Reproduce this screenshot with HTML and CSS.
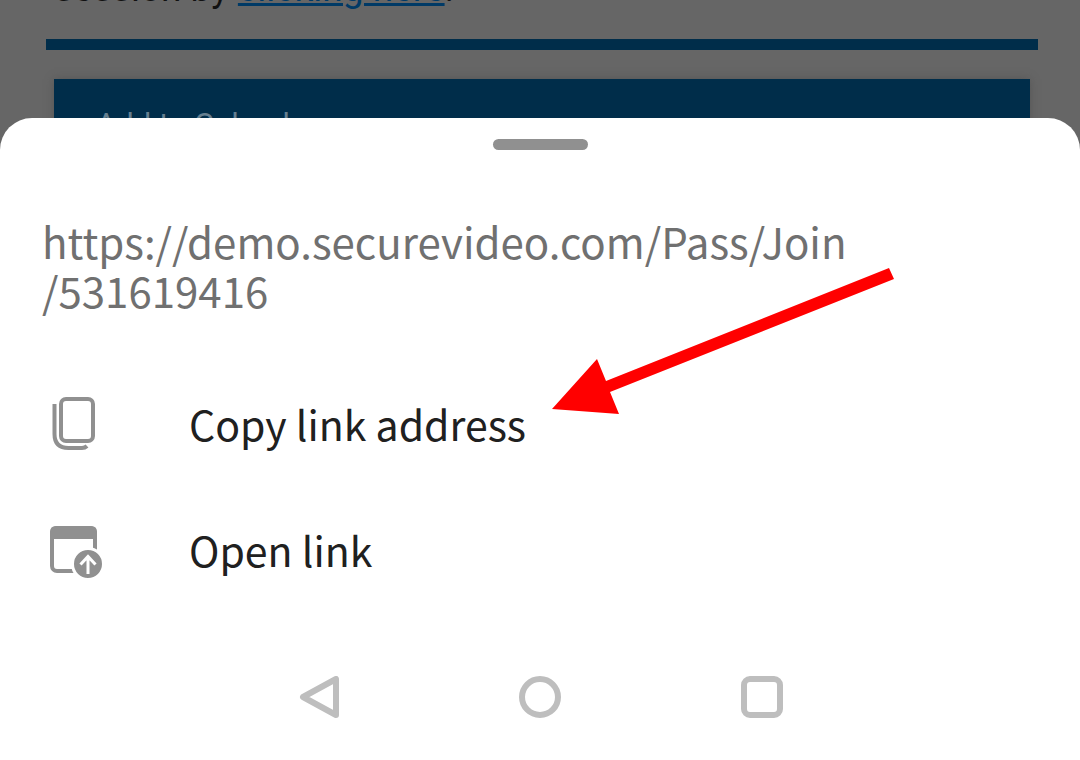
FILE: index.html
```
<!DOCTYPE html>
<html lang="en">
    <head>
        <meta charset="utf-8">
        <title>Link menu</title>
        <link rel="stylesheet" href="styles.css">
    </head>
    <body>
        <div class="container">
            <div class="page">
                <p class="message">session by <a class="page-link" href="#">clicking here</a>.</p>
                <hr class="divider">
                <a class="calendar" href="#">Add to Calendar</a>
            </div>
            <main class="sheet">
                <div class="handle"></div>
                <p class="url">https://demo.securevideo.com/Pass/Join<br>/531619416</p>
                <ul class="menu">
                    <li>
                        <button class="menu-item" type="button">
                            <svg class="icon" viewBox="0 0 60 60" aria-hidden="true">
                                <rect x="13" y="6" width="32" height="42" rx="5"/>
                                <path d="M6.500 11v30q0 14 14 14H34q3 0 5-2" />
                            </svg>
                            Copy link address
                        </button>
                    </li>
                    <li>
                        <button class="menu-item" type="button">
                            <svg class="icon" viewBox="0 0 60 60" aria-hidden="true">
                                <rect x="4" y="9" width="43" height="43" rx="5"/>
                                <path class="fill" d="M2 20v-7q0-6 6-6h35q6 0 6 6v7z"/>
                                <circle class="badge" cx="40" cy="45" r="15.500"/>
                                <path class="badge-arrow" d="M40 55V38M32.500 45.500l7.500-8 7.500 8"/>
                            </svg>
                            Open link
                        </button>
                    </li>
                </ul>
                <nav class="nav">
                    <button class="nav-btn" type="button" aria-label="Back">
                        <svg viewBox="0 0 42 42"><path d="M39 3v36L6 21z"/></svg>
                    </button>
                    <button class="nav-btn" type="button" aria-label="Home">
                        <svg viewBox="0 0 42 42"><circle cx="21" cy="21" r="18"/></svg>
                    </button>
                    <button class="nav-btn" type="button" aria-label="Recent apps">
                        <svg viewBox="0 0 42 42"><rect x="3" y="3" width="36" height="36" rx="6"/></svg>
                    </button>
                </nav>
                <!-- pointer over the copy item -->
                <svg class="arrow" viewBox="0 0 342 148" aria-hidden="true">
                    <path d="M0 142L45 92l9 22L337 1l5 11L58 125l9 22z"/>
                </svg>
            </main>
        </div>
    </body>
</html>
```
FILE: styles.css
```
html,body {
    margin: 0;
}
body {
    background: #fff;
    font-family: "Noto Sans CJK SC", "Noto Sans", sans-serif;
}
.container {
    display: flex;
    flex-direction: column;
    min-height: 100vh;
}
/* dimmed page behind the sheet */
.page {
    display: flex;
    flex-direction: column;
    justify-content: flex-end;
    box-sizing: border-box;
    height: 150px;
    padding: 0 42px 0 46px;
    overflow: hidden;
    background: #666;
    font-family: Roboto, sans-serif;
}
.message {
    margin: 0 8px 28px;
    font-size: 37px;
    line-height: 44px;
    color: #111;
}
.page-link {
    color: #003a66;
    text-decoration-thickness: 3px;
}
.divider {
    width: 100%;
    height: 11px;
    margin: 0 0 29px;
    border: 0;
    flex-shrink: 0;
    background: #002d4a;
}
.calendar {
    margin: 0 8px;
    padding: 24px 42px 3px;
    background: #002d4a;
    box-shadow: 0 0 8px #555;
    color: #667f90;
    font-size: 31px;
    line-height: 44px;
    text-decoration: none;
}
/* bottom sheet */
.sheet {
    position: relative;
    display: flex;
    flex-direction: column;
    flex: 1;
    margin-top: -32px;
    border-radius: 32px 32px 0 0;
    background: #fff;
}
.handle {
    width: 95px;
    height: 11px;
    margin: 21px auto 66px;
    border-radius: 6px;
    background: #909090;
}
.url {
    margin: 0 42px;
    color: #707070;
    font-size: 42px;
    line-height: 49px;
}
.menu {
    display: flex;
    flex-direction: column;
    margin: 46px 0 0;
    padding: 0;
    list-style: none;
}
.menu-item {
    display: flex;
    align-items: center;
    gap: 81px;
    width: 100%;
    height: 126px;
    padding: 0 48px;
    border: 0;
    background: none;
    color: #202020;
    font-family: inherit;
    font-size: 41px;
    text-align: left;
    cursor: pointer;
}
.icon {
    width: 60px;
    height: 60px;
    fill: none;
    stroke: #909090;
    stroke-width: 4;
}
.icon .fill {
    fill: #909090;
    stroke: none;
}
.icon .badge {
    fill: #909090;
    stroke: #fff;
    stroke-width: 3;
}
.icon .badge-arrow {
    stroke: #fff;
    stroke-width: 3;
}
.nav {
    display: flex;
    justify-content: center;
    gap: 180px;
    margin: auto 0 42px;
}
.nav-btn {
    width: 42px;
    height: 42px;
    padding: 0;
    border: 0;
    background: none;
    cursor: pointer;
}
.nav-btn svg {
    display: block;
    fill: none;
    stroke: #bebebe;
    stroke-width: 6;
    stroke-linejoin: round;
}
.arrow {
    position: absolute;
    top: 149px;
    left: 552px;
    width: 342px;
    height: 148px;
    fill: #f00;
    pointer-events: none;
}
```
